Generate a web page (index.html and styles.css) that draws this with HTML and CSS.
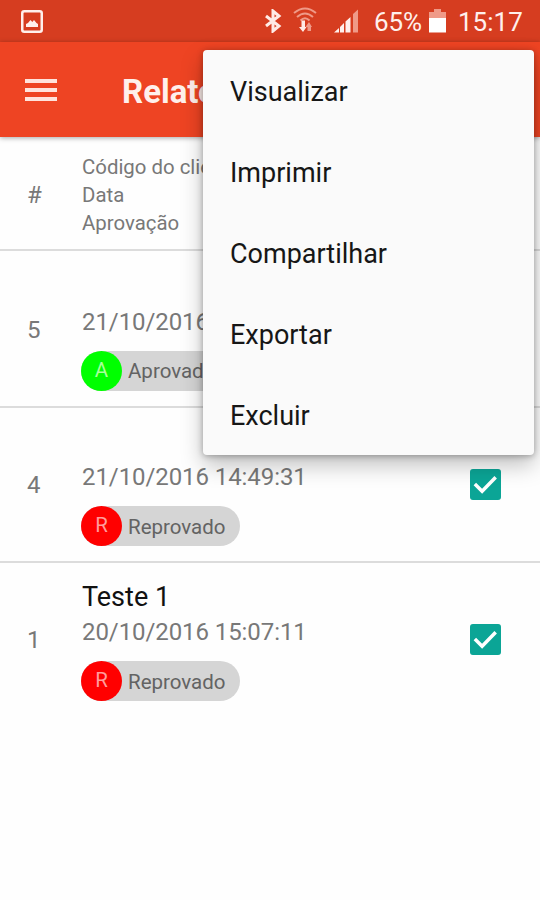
FILE: index.html
```html
<!DOCTYPE html>
<html lang="pt-BR">
<head>
<meta charset="utf-8">
<title>Relatórios</title>
<link rel="stylesheet" href="styles.css">
</head>
<body>
<div class="status">
  <svg class="picture" width="22" height="23" viewBox="0 0 22 23"><rect x="1.25" y="1.25" width="19.5" height="20.5" rx="2" fill="none" stroke="#fff0ec" stroke-width="2.5"/><path d="M5 17v-3l2-1 2.500-3 1.800 2 1.700-2 2.500 3 1.500 1V17z" fill="#fff0ec"/></svg>
  <svg class="bluetooth" width="18" height="24" viewBox="0 0 18 24"><path d="M2 7l13 10-6 5V2l6 5L2 17" fill="none" stroke="#ffebe6" stroke-width="3"/></svg>
  <svg class="wifi" width="24" height="26" viewBox="0 0 24 26"><g fill="none" stroke="#ef9a88" stroke-width="2"><path d="M1 6Q12-3 23 6"/><path d="M4 10Q12 3 20 10"/><path d="M7.500 13.500Q12 9 16.500 13.500"/></g><path d="M8.500 13.500h3.500v6.500h1.500L10 25l-4-5h2.500z" fill="#ffebe6"/><path d="M14.500 24v-4h-2l3.500-5 3 5h-1v4z" fill="#ef9a88"/></svg>
  <svg class="signal" width="25" height="24" viewBox="0 0 25 24"><path d="M0 23.500L5 19v4.500zM6 18l4-4v9.500H6zM11.500 12.500l5-4.500v15.500h-5z" fill="#fff0ec"/><path d="M19 5l5-4.500v23h-5z" fill="#ef9a88"/></svg>
  <span class="percent">65%</span>
  <svg class="battery" width="17" height="24" viewBox="0 0 17 24"><path d="M0 3h5V0h7v3h5v7H0z" fill="#ef9a88"/><path d="M0 9h17v14.500H0z" fill="#fff"/></svg>
  <span class="clock">15:17</span>
</div>
<header class="appbar">
  <div class="burger"><i></i><i></i><i></i></div>
  <h1>Relatórios</h1>
</header>
<main>
  <section class="row head">
    <div class="num">#</div>
    <div class="labels"><div>Código do cliente</div><div>Data</div><div>Aprovação</div></div>
  </section>
  <section class="row first">
    <div class="num">5</div>
    <div class="info"><div class="name"></div><div class="date">21/10/2016</div><div class="chip"><b class="ok">A</b><span>Aprovado</span></div></div>
  </section>
  <section class="row">
    <div class="num">4</div>
    <div class="info"><div class="name"></div><div class="date">21/10/2016 14:49:31</div><div class="chip"><b>R</b><span>Reprovado</span></div></div>
    <svg class="check" width="31" height="31" viewBox="0 0 32 32"><rect width="32" height="32" rx="3" fill="#0ba596"/><path d="M5 15.500l7.500 7.500L26.500 8.500" fill="none" stroke="#fff" stroke-width="3.600"/></svg>
  </section>
  <section class="row last">
    <div class="num">1</div>
    <div class="info"><div class="name">Teste 1</div><div class="date">20/10/2016 15:07:11</div><div class="chip"><b>R</b><span>Reprovado</span></div></div>
    <svg class="check" width="31" height="31" viewBox="0 0 32 32"><rect width="32" height="32" rx="3" fill="#0ba596"/><path d="M5 15.500l7.500 7.500L26.500 8.500" fill="none" stroke="#fff" stroke-width="3.600"/></svg>
  </section>
</main>
<nav class="menu">
  <div>Visualizar</div>
  <div>Imprimir</div>
  <div>Compartilhar</div>
  <div>Exportar</div>
  <div>Excluir</div>
</nav>
</body>
</html>
```
FILE: styles.css
```css
* { box-sizing: border-box; }
body {
  margin: 0;
  width: 540px;
  height: 900px;
  position: relative;
  overflow: hidden;
  background: #fefefe;
  font-family: Roboto, "Liberation Sans", sans-serif;
  color: #787878;
}
.status {
  height: 42px;
  background: #d63d20;
  display: flex;
  align-items: center;
  padding: 0 18px 0 21px;
  color: #fff0ec;
  font-size: 26px;
}
.status span { display: block; line-height: 42px; white-space: nowrap; padding-top: 1px; }
.bluetooth { margin-left: auto; }
.wifi { margin-left: 11px; margin-top: -3px; }
.signal { margin-left: 17px; }
.percent { width: 48px; margin-left: 15px; font-size: 26px; letter-spacing: -.1px; }
.battery { margin-left: 7px; }
.clock { width: 64px; margin-left: 12px; }
.appbar {
  height: 95px;
  background: #ee4423;
  display: flex;
  align-items: center;
  padding-left: 25px;
  position: relative;
  box-shadow: 0 1px 5px rgba(0, 0, 0, .35);
}
.burger { display: grid; gap: 5px; width: 32px; }
.burger i { height: 4px; background: #ffe3dc; }
h1 {
  margin: 0 0 0 65px;
  padding-top: 4px;
  width: 81px;
  overflow: hidden;
  white-space: nowrap;
  font-size: 33px;
  line-height: 40px;
  font-weight: 700;
  color: #fff0ec;
}
.row {
  height: 155px;
  display: flex;
  align-items: center;
  border-bottom: 2px solid #dcdcdc;
  padding-right: 39px;
}
.row.head { height: 114px; }
.row.first { height: 157px; }
.row.last { height: 153px; border: 0; }
.num { width: 81px; padding: 1px 0 0 27px; font-size: 24px; line-height: 30px; }
.first .num { padding-top: 2px; }
.head .num { width: 82px; padding-top: 4px; }
.labels {
  width: 121px;
  overflow: hidden;
  white-space: nowrap;
  font-size: 20.4px;
  line-height: 28px;
  padding-top: 4px;
}
.info { padding-top: 3px; }
.first .info { width: 122px; padding-top: 4px; overflow: hidden; }
.name { height: 33px; padding-left: 1px; font-size: 27px; line-height: 33px; color: #111; }
.date { padding-left: 1px; font-size: 24px; line-height: 36px; letter-spacing: -.08px; }
.chip {
  display: flex;
  align-items: center;
  width: 159px;
  height: 40px;
  margin-top: 11px;
  background: #d5d5d5;
  border-radius: 20px;
  font-size: 20.5px;
  color: #636363;
}
.chip span { padding-top: 1px; }
.first .chip { width: 122px; border-radius: 20px 0 0 20px; }
.first .chip span { width: 75px; overflow: hidden; }
.chip b {
  flex: none;
  width: 41px;
  height: 40px;
  margin-right: 6px;
  border-radius: 50%;
  background: #f00;
  color: #ff9c9c;
  font-weight: 400;
  line-height: 39px;
  text-align: center;
}
.chip .ok { background: #0f0; color: #a8ff9c; }
.check { margin-left: auto; }
.menu {
  position: absolute;
  left: 203px;
  top: 50px;
  width: 331px;
  height: 405px;
  background: #fafafa;
  border-radius: 4px;
  box-shadow: 0 10px 22px rgba(0, 0, 0, .25), 0 1px 6px rgba(0, 0, 0, .3);
  display: grid;
  grid-template-rows: repeat(5, 81px);
  padding-left: 27px;
  color: #161616;
  font-size: 27px;
  line-height: 85px;
}
```
